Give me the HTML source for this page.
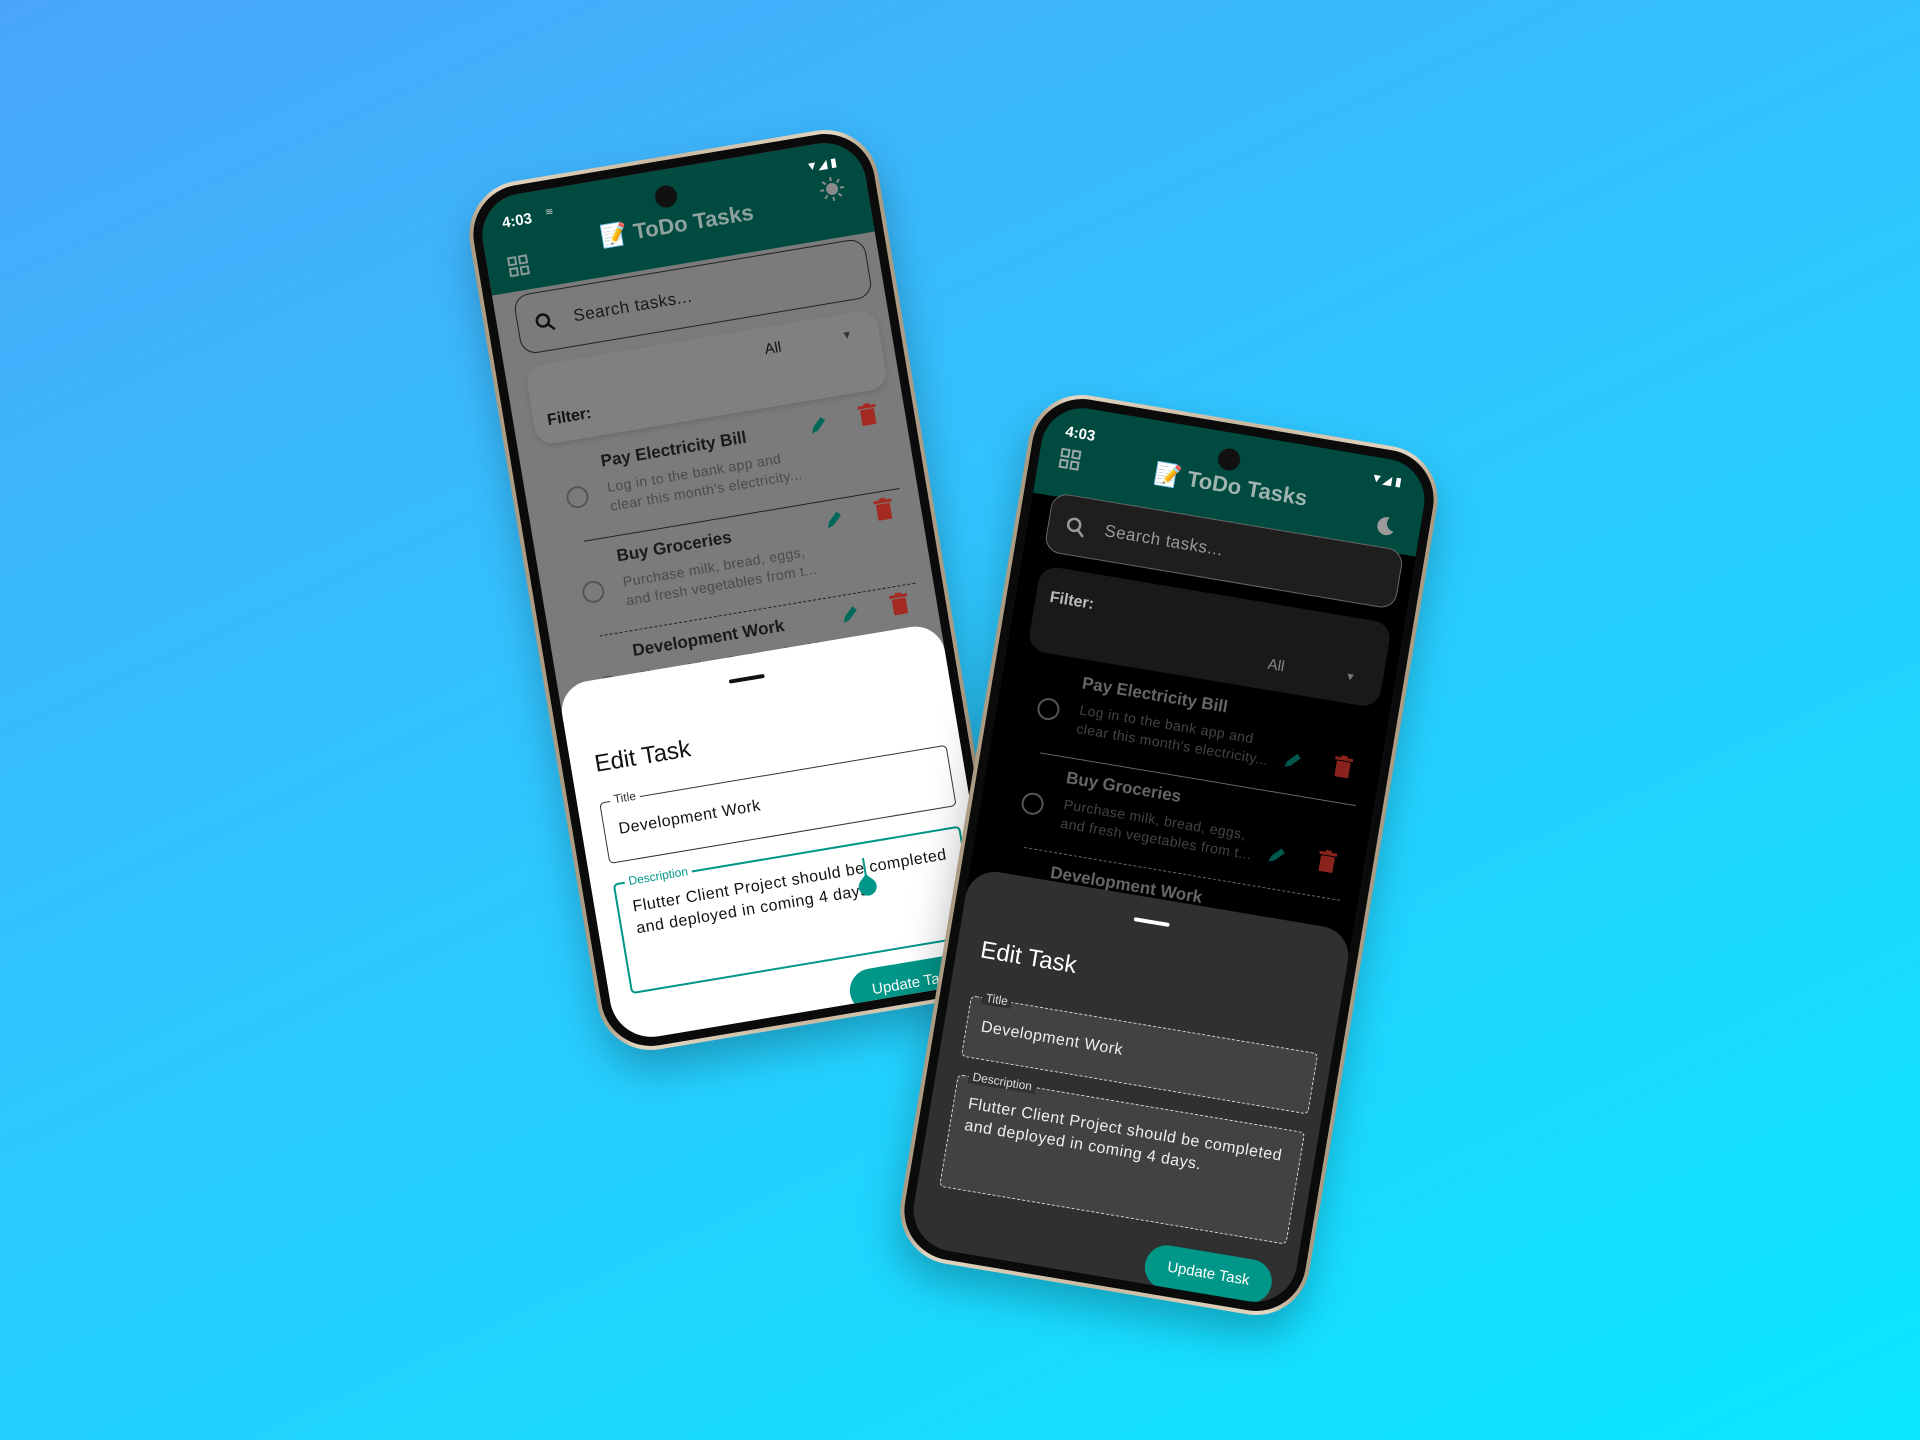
<!DOCTYPE html>
<html><head><meta charset="utf-8"><style>
*{margin:0;padding:0;box-sizing:border-box}
body{width:1920px;height:1440px;overflow:hidden;background:linear-gradient(155deg,#4aa6fa 0%,#2ec6fe 45%,#0ae8ff 100%);font-family:"Liberation Sans","DejaVu Sans",sans-serif;position:relative}
.phone{position:absolute;width:414px;height:880px;border-radius:54px;background:linear-gradient(90deg,#a89880,#e2d6c2 8%,#c9b9a0 50%,#e2d6c2 92%,#a89880);padding:4px;box-shadow:0 20px 40px rgba(0,0,0,.25)}
.bezel{width:100%;height:100%;border-radius:50px;background:#0b0b0b;padding:9px}
.screen{position:relative;width:100%;height:100%;border-radius:42px;overflow:hidden}
.abs{position:absolute}
.bar{left:0;top:0;width:100%;height:96px;background:#004a3f}
.time{left:22px;top:18px;color:#fff;font-size:15px;font-weight:bold}
.cam{left:177px;top:16px;width:22px;height:22px;border-radius:50%;background:#111}
.title{left:0;width:100%;top:44px;text-align:center;font-size:22px;font-weight:bold}
.search{left:20px;top:100px;width:356px;height:60px;border-radius:16px}
.search span{position:absolute;left:56px;top:19px;font-size:17px;letter-spacing:.5px}
.filter{left:20px;top:172px;width:356px;height:80px;border-radius:18px}
.task{left:0;width:100%;height:96px}
.tt{position:absolute;left:80px;top:10px;font-size:17px;font-weight:bold}
.td{position:absolute;left:82px;top:37px;font-size:14px;line-height:19px;letter-spacing:.4px}
.circ{position:absolute;left:40px;top:40px;width:22px;height:22px;border-radius:50%;border:2px solid}
.div{position:absolute;left:50px;right:18px;bottom:0;border-top:1px dashed}
.sheet{left:0;width:100%;height:420px;border-radius:30px 30px 0 0}
.handle{left:170px;top:22px;width:36px;height:4px;border-radius:2px}
.et{left:24px;top:70px;font-size:24px}
.field{left:22px;width:352px;border-radius:5px;border:1px solid}
.lab{position:absolute;top:-9px;left:10px;font-size:12px;padding:0 4px}
.ft{position:absolute;left:14px;font-size:16px;letter-spacing:.5px;line-height:22px}
.btn{right:22px;top:318px;width:128px;height:44px;border-radius:22px;background:#009688;color:#fff;font-size:15px;text-align:center;line-height:44px}
</style></head><body>

<!-- LEFT PHONE -->
<div class="phone" style="left:531px;top:150px;transform:rotate(-9.5deg)">
<div class="bezel"><div class="screen" style="background:#7b7b7b">
 <div class="abs bar"></div>
 <div class="abs time">4:03</div>
 <div class="abs" style="left:66px;top:18px;color:#ccc;font-size:10px">≋</div>
 <div class="abs cam"></div>
 <div class="abs" style="right:26px;top:14px;color:#fff;font-size:12px">▼◢ ▮</div>
 <svg class="abs" style="left:20px;top:60px" width="22" height="22" viewBox="0 0 22 22" fill="none" stroke="#8a9a97" stroke-width="2"><rect x="2" y="2" width="7" height="7"/><rect x="13" y="2" width="7" height="7"/><rect x="2" y="13" width="7" height="7"/><rect x="13" y="13" width="7" height="7"/></svg>
 <div class="abs title" style="color:#8fa29e">📝 ToDo Tasks</div>
 <svg class="abs" style="right:22px;top:34px" width="26" height="26" viewBox="0 0 26 26" stroke="#8a8a8a" stroke-width="2" fill="#8a8a8a"><circle cx="13" cy="13" r="5"/><path d="M13 1v4M13 21v4M1 13h4M21 13h4M4.5 4.5l3 3M18.5 18.5l3 3M4.5 21.5l3-3M18.5 7.5l3-3"/></svg>
 <div class="abs search" style="border:1.5px solid #222"><svg class="abs" style="left:16px;top:19px" width="22" height="22" viewBox="0 0 22 22" fill="none" stroke="#111" stroke-width="2.5"><circle cx="9" cy="9" r="6"/><path d="M13.5 13.5l6 6"/></svg><span style="color:#1a1a1a">Search tasks...</span></div>
 <div class="abs filter" style="background:#808080;box-shadow:0 2px 6px rgba(0,0,0,.15)"><div class="abs" style="left:14px;top:48px;font-weight:bold;font-size:16px;color:#111">Filter:</div><div class="abs" style="left:240px;top:14px;font-size:15px;color:#111">All</div><div class="abs" style="left:318px;top:16px;font-size:11px;color:#333">▼</div></div>
 <div class="abs task" style="top:258px"><div class="circ" style="border-color:#555"></div><div class="tt" style="color:#1a1a1a">Pay Electricity Bill</div><div class="td" style="color:#4a4a4a">Log in to the bank app and<br>clear this month's electricity...</div><div class="div" style="border-color:#222;border-top-style:solid"></div></div>
 <div class="abs task" style="top:354px"><div class="circ" style="border-color:#555"></div><div class="tt" style="color:#1a1a1a">Buy Groceries</div><div class="td" style="color:#4a4a4a">Purchase milk, bread, eggs,<br>and fresh vegetables from t...</div><div class="div" style="border-color:#222"></div></div>
 <div class="abs task" style="top:450px"><div class="circ" style="border-color:#555"></div><div class="tt" style="color:#1a1a1a">Development Work</div><div class="td" style="color:#4a4a4a">Flutter Client Project should</div></div>
 <svg class="abs" style="left:290px;top:268px" width="20" height="20" viewBox="0 0 20 20"><path d="M3 17l2-6 9-9 4 4-9 9z" fill="#00695c"/></svg>
 <svg class="abs" style="left:342px;top:264px" width="18" height="22" viewBox="0 0 18 22" fill="#a52a22"><rect x="2" y="6" width="14" height="16" rx="1"/><rect x="0" y="2" width="18" height="3"/><rect x="6" y="0" width="6" height="3"/></svg>
 <svg class="abs" style="left:290px;top:364px" width="20" height="20" viewBox="0 0 20 20"><path d="M3 17l2-6 9-9 4 4-9 9z" fill="#00695c"/></svg>
 <svg class="abs" style="left:342px;top:360px" width="18" height="22" viewBox="0 0 18 22" fill="#a52a22"><rect x="2" y="6" width="14" height="16" rx="1"/><rect x="0" y="2" width="18" height="3"/><rect x="6" y="0" width="6" height="3"/></svg>
 <svg class="abs" style="left:290px;top:460px" width="20" height="20" viewBox="0 0 20 20"><path d="M3 17l2-6 9-9 4 4-9 9z" fill="#00695c"/></svg>
 <svg class="abs" style="left:342px;top:456px" width="18" height="22" viewBox="0 0 18 22" fill="#a52a22"><rect x="2" y="6" width="14" height="16" rx="1"/><rect x="0" y="2" width="18" height="3"/><rect x="6" y="0" width="6" height="3"/></svg>
 <div class="abs sheet" style="background:#fff;top:492px">
  <div class="abs handle" style="background:#111"></div>
  <div class="abs et" style="color:#111">Edit Task</div>
  <div class="abs field" style="top:122px;height:62px;border-color:#333"><div class="lab" style="background:#fff;color:#333">Title</div><div class="ft" style="top:18px;color:#111">Development Work</div></div>
  <div class="abs field" style="top:204px;height:112px;border:2px solid #009688"><div class="lab" style="background:#fff;color:#009688">Description</div><div class="ft" style="top:14px;color:#111;width:380px">Flutter Client Project should be completed<br>and deployed in coming 4 days.</div><div class="abs" style="left:248px;top:14px;width:2px;height:22px;background:#009688"></div><div class="abs" style="left:240px;top:34px;width:18px;height:18px;border-radius:0 50% 50% 50%;background:#009688;transform:rotate(45deg)"></div></div>
  <div class="abs btn" style="top:330px">Update Task</div>
 </div>
</div></div></div>

<!-- RIGHT PHONE -->
<div class="phone" style="left:962px;top:415px;transform:rotate(9.5deg);z-index:2">
<div class="bezel"><div class="screen" style="background:#000">
 <div class="abs bar" style="height:92px"></div>
 <div class="abs time">4:03</div>
 <div class="abs cam"></div>
 <div class="abs" style="right:26px;top:14px;color:#fff;font-size:12px">▼◢ ▮</div>
 <svg class="abs" style="left:20px;top:42px" width="22" height="22" viewBox="0 0 22 22" fill="none" stroke="#9aa8a6" stroke-width="2"><rect x="2" y="2" width="7" height="7"/><rect x="13" y="2" width="7" height="7"/><rect x="2" y="13" width="7" height="7"/><rect x="13" y="13" width="7" height="7"/></svg>
 <div class="abs title" style="color:#9fb3af;top:40px">📝 ToDo Tasks</div>
 <svg class="abs" style="right:24px;top:56px" width="22" height="22" viewBox="0 0 22 22"><path d="M14 2a9 9 0 1 0 6 13A8 8 0 0 1 14 2z" fill="#9a9a9a"/></svg>
 <div class="abs search" style="background:#1e1e1e;border:1.5px solid #666;top:88px"><svg class="abs" style="left:16px;top:19px" width="22" height="22" viewBox="0 0 22 22" fill="none" stroke="#9a9a9a" stroke-width="2.5"><circle cx="9" cy="9" r="6"/><path d="M13.5 13.5l6 6"/></svg><span style="color:#9a9a9a">Search tasks...</span></div>
 <div class="abs filter" style="background:#191919;top:162px;height:86px"><div class="abs" style="left:14px;top:22px;font-weight:bold;font-size:16px;color:#bbb">Filter:</div><div class="abs" style="left:240px;top:52px;font-size:15px;color:#888">All</div><div class="abs" style="left:318px;top:54px;font-size:11px;color:#777">▼</div></div>
 <div class="abs task" style="top:252px"><div class="circ" style="border-color:#555"></div><div class="tt" style="color:#666">Pay Electricity Bill</div><div class="td" style="color:#444">Log in to the bank app and<br>clear this month's electricity...</div><div class="div" style="border-color:#666;border-top-style:solid"></div></div>
 <div class="abs task" style="top:348px"><div class="circ" style="border-color:#555"></div><div class="tt" style="color:#666">Buy Groceries</div><div class="td" style="color:#444">Purchase milk, bread, eggs,<br>and fresh vegetables from t...</div><div class="div" style="border-color:#666"></div></div>
 <div class="abs task" style="top:444px"><div class="circ" style="border-color:#555"></div><div class="tt" style="color:#666">Development Work</div><div class="td" style="color:#444">Flutter Client Project should</div></div>
 <svg class="abs" style="left:290px;top:304px" width="20" height="20" viewBox="0 0 20 20"><path d="M3 17l2-6 9-9 4 4-9 9z" fill="#00574d"/></svg>
 <svg class="abs" style="left:342px;top:300px" width="18" height="22" viewBox="0 0 18 22" fill="#8a231c"><rect x="2" y="6" width="14" height="16" rx="1"/><rect x="0" y="2" width="18" height="3"/><rect x="6" y="0" width="6" height="3"/></svg>
 <svg class="abs" style="left:290px;top:400px" width="20" height="20" viewBox="0 0 20 20"><path d="M3 17l2-6 9-9 4 4-9 9z" fill="#00574d"/></svg>
 <svg class="abs" style="left:342px;top:396px" width="18" height="22" viewBox="0 0 18 22" fill="#8a231c"><rect x="2" y="6" width="14" height="16" rx="1"/><rect x="0" y="2" width="18" height="3"/><rect x="6" y="0" width="6" height="3"/></svg>
 <svg class="abs" style="left:290px;top:496px" width="20" height="20" viewBox="0 0 20 20"><path d="M3 17l2-6 9-9 4 4-9 9z" fill="#00574d"/></svg>
 <svg class="abs" style="left:342px;top:492px" width="18" height="22" viewBox="0 0 18 22" fill="#8a231c"><rect x="2" y="6" width="14" height="16" rx="1"/><rect x="0" y="2" width="18" height="3"/><rect x="6" y="0" width="6" height="3"/></svg>
 <div class="abs sheet" style="background:#303030;top:472px">
  <div class="abs handle" style="background:#fff"></div>
  <div class="abs et" style="color:#fff;top:66px">Edit Task</div>
  <div class="abs field" style="top:126px;height:62px;background:#424242;border:1px dashed #ddd"><div class="lab" style="background:#303030;color:#ddd;top:-8px">Title</div><div class="ft" style="top:18px;color:#eee">Development Work</div></div>
  <div class="abs field" style="top:206px;height:114px;background:#424242;border:1px dashed #ddd"><div class="lab" style="background:#303030;color:#ddd;top:-8px">Description</div><div class="ft" style="top:16px;color:#eee">Flutter Client Project should be completed<br>and deployed in coming 4 days.</div></div>
  <div class="abs btn" style="top:340px">Update Task</div>
 </div>
</div></div></div>
</body></html>
